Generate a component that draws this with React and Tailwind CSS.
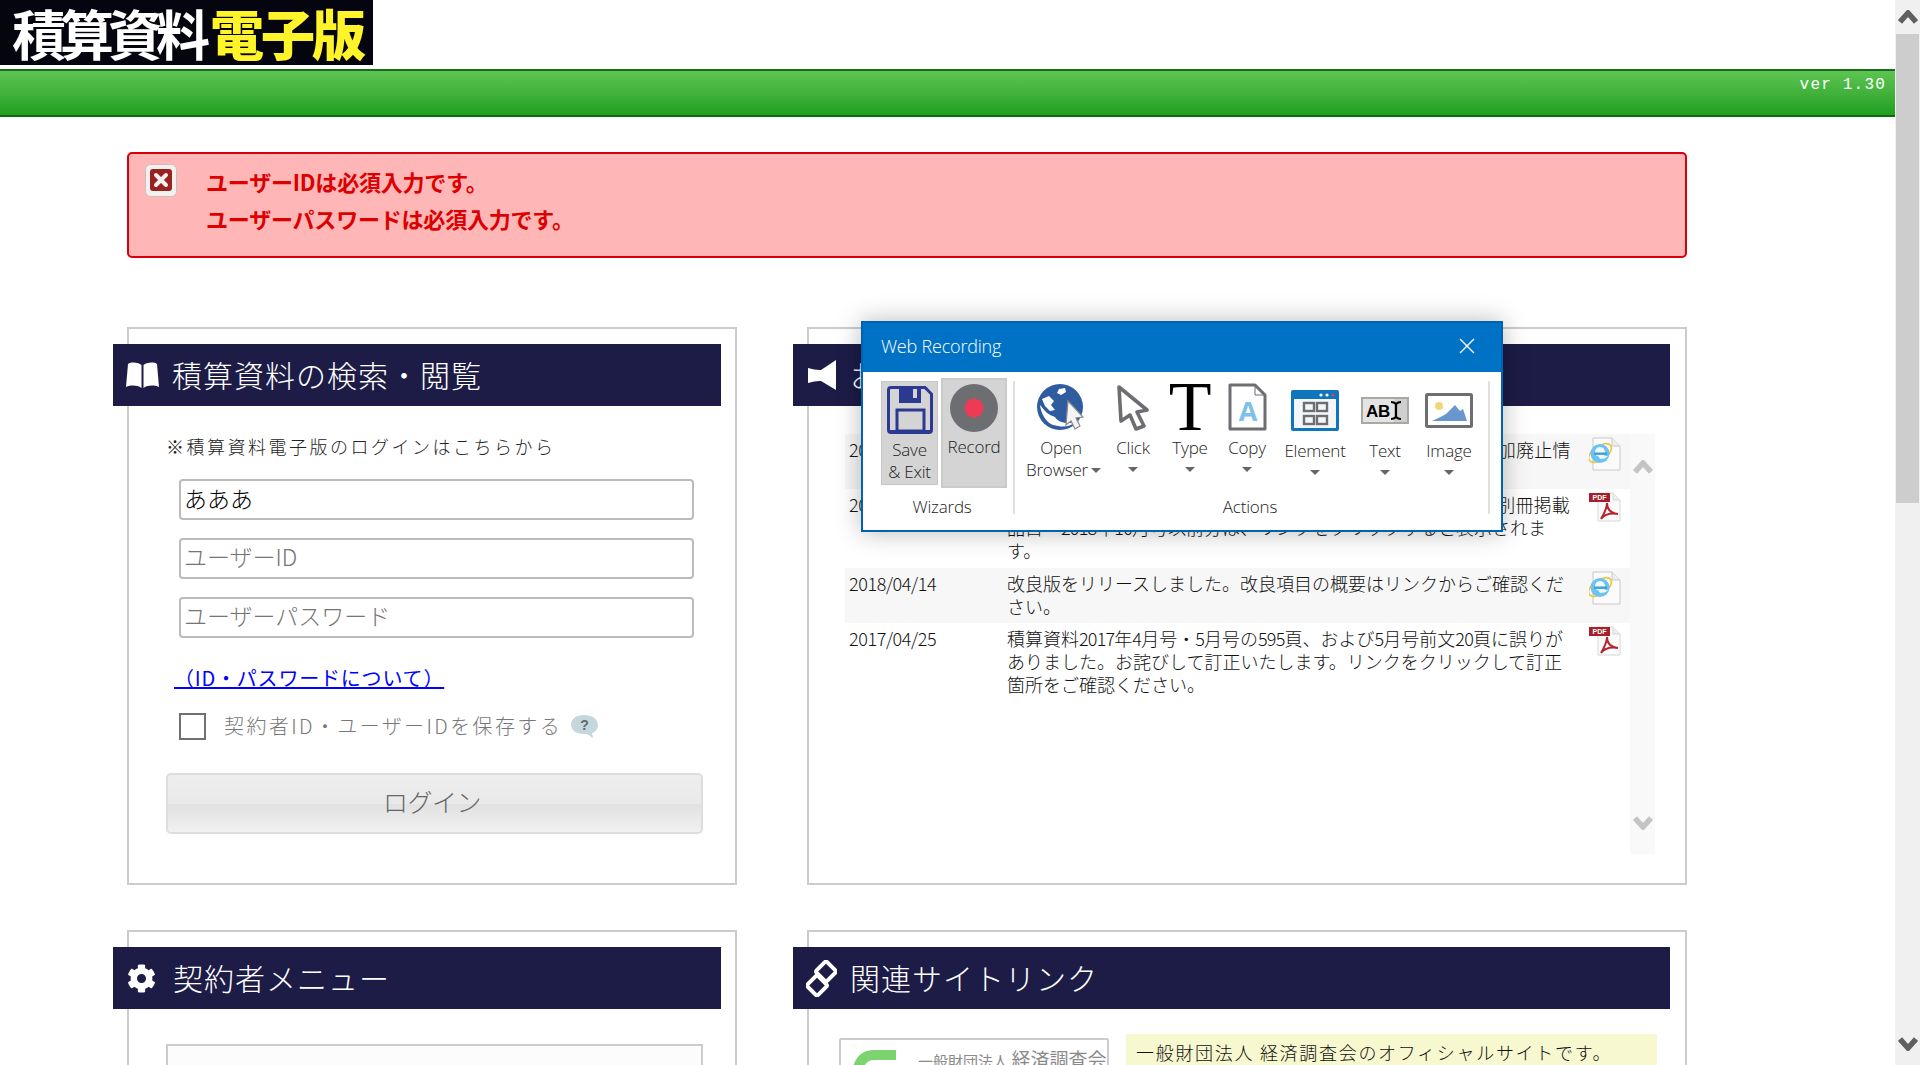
import React from "react";
import { FaCog } from "react-icons/fa";

const N = ({ children }) => <span className="tracking-[-0.8px]">{children}</span>;

const Chevron = ({ up, color = "#606060", size = 20, stroke = 5.5 }) => (
  <svg width={size} height={size * 0.7} viewBox="0 0 20 14" fill="none">
    <path d={up ? "M2 12 L10 3 L18 12" : "M2 2 L10 11 L18 2"} stroke={color} strokeWidth={stroke} />
  </svg>
);

const BookIcon = () => (
  <svg width="33" height="27" viewBox="0 0 33 27" fill="#fff">
    <path d="M15.5 3 C11 0 5 0 2 2 L0 25 C5 23 11 23 15.5 26 Z" />
    <path d="M17.5 3 C22 0 28 0 31 2 L33 25 C28 23 22 23 17.5 26 Z" />
  </svg>
);

const MegaphoneIcon = () => (
  <svg width="28" height="30" viewBox="0 0 28 30" fill="#fff">
    <path d="M0 8 Q8 10.5 13 10 L28 0 L28 30 L13 21 Q8 20.5 0 23 Z" />
  </svg>
);

const LinkIcon = () => (
  <svg width="31" height="37" viewBox="0 0 31 37" fill="none" stroke="#fff" strokeWidth="4">
    <rect x="12.5" y="4" width="15" height="15" rx="2" transform="rotate(45 20 11.5)" />
    <rect x="3.5" y="18" width="15" height="15" rx="2" transform="rotate(45 11 25.5)" />
  </svg>
);

const ErrorIcon = () => (
  <svg width="32" height="33" viewBox="0 0 32 33">
    <rect x="0.5" y="0.5" width="31" height="32" rx="5" fill="#f3f0f0" stroke="#cdbcbc" />
    <rect x="5" y="5" width="22" height="22" rx="3" fill="#97221f" />
    <path d="M11 11 L21 21 M21 11 L11 21" stroke="#f4f0f0" strokeWidth="4" strokeLinecap="round" />
  </svg>
);

const HelpIcon = () => (
  <svg width="29" height="25" viewBox="0 0 29 25">
    <path d="M14 1 C22 1 28 5 28 11 C28 15 25 18 22 19 L23 24 L17 20 L14 20 C6 20 1 16 1 11 C1 5 6 1 14 1 Z" fill="#c5d6dc" />
    <text x="14.5" y="16" fontSize="14" fontWeight="700" textAnchor="middle" fill="#5d6a72" fontFamily="Liberation Sans">?</text>
  </svg>
);

const IeIcon = () => (
  <svg width="32" height="34" viewBox="0 0 32 34">
    <path d="M4 1 H23 L31 9 V33 H4 Z" fill="#fbfbfb" stroke="#c9c9c9" />
    <path d="M23 1 V9 H31" fill="#eeeeee" stroke="#c9c9c9" />
    <ellipse cx="11" cy="16" rx="13" ry="7" fill="none" stroke="#eec53a" strokeWidth="1.6" transform="rotate(-35 11 16)" />
    <circle cx="11" cy="16.5" r="9.5" fill="#6cc2f0" />
    <circle cx="11" cy="15" r="5" fill="#eef9fe" />
    <rect x="5" y="15.5" width="13" height="2.4" fill="#3f9fdc" />
    <path d="M9 18 H14 L19 19.5 Q16 22 11 22 Z" fill="#eef9fe" />
  </svg>
);

const PdfIcon = () => (
  <svg width="32" height="30" viewBox="0 0 32 30">
    <path d="M9 1 H24 L31 8 V29 H9 Z" fill="#fbfbfb" stroke="#d6d6d6" />
    <path d="M24 1 V8 H31" fill="#eeeeee" stroke="#d6d6d6" />
    <rect x="0" y="1" width="21" height="9" fill="#a81f2b" />
    <text x="10.5" y="8" fontSize="7" fontWeight="700" fill="#fff" textAnchor="middle" fontFamily="Liberation Sans">PDF</text>
    <path d="M12 27 C15 22 18 17 18 11 C18 17 21 21 29 22 C23 21 16 22 12 27 Z" fill="none" stroke="#b5232e" strokeWidth="2" />
  </svg>
);

const SaveIcon = () => (
  <svg width="46" height="48" viewBox="0 0 46 48">
    <path d="M4 1.5 H38 L44.5 8 V44 Q44.5 46.5 42 46.5 H4 Q1.5 46.5 1.5 44 V4 Q1.5 1.5 4 1.5 Z" fill="none" stroke="#2b3990" strokeWidth="3" />
    <path d="M12 2 H34 V17 H12 Z" fill="#2b3990" />
    <rect x="26" y="3" width="4" height="9" fill="#d4d4d4" />
    <rect x="10" y="24" width="27" height="21" fill="none" stroke="#2b3990" strokeWidth="3" />
    <rect x="1" y="44" width="44" height="3" fill="#2b3990" />
  </svg>
);

const RecordIcon = () => (
  <svg width="48" height="48" viewBox="0 0 48 48">
    <circle cx="24" cy="24" r="24" fill="#6d6e71" />
    <circle cx="24" cy="24" r="9.5" fill="#ef3a55" />
  </svg>
);

const GlobeIcon = () => (
  <svg width="48" height="46" viewBox="0 0 48 46">
    <circle cx="23" cy="23" r="23" fill="#2f5c9e" />
    <path d="M3 21 C7 26 11 31 18 33 C20 37 28 41 38 38 C32 44 24 43 16 41 C9 38 4 30 3 21 Z" fill="#fff" />
    <path d="M5 15 L12 12 L17 17 L14 21 L18 26 L13 27 L8 22 Z" fill="#fff" />
    <path d="M22 5 L28 4 L29 8 L24 11 L20 9 Z" fill="#fff" />
    <path d="M31 17 L46 33 L39 34 L43 42 L38 45 L34 37 L29 41 Z" fill="#f4f4f4" stroke="#8a8a8a" strokeWidth="1.2" />
  </svg>
);

const CursorIcon = () => (
  <svg width="34" height="47" viewBox="0 0 34 47">
    <path d="M3 3 L31 26 L21 28 L28 42 L20 45 L14 31 L5 37 Z" fill="#fff" stroke="#6d6e71" strokeWidth="3.6" strokeLinejoin="round" />
  </svg>
);

const TypeIcon = () => (
  <span className="font-['Liberation_Serif',serif] text-[70px] leading-[48px] text-black">T</span>
);

const CopyIcon = () => (
  <svg width="39" height="48" viewBox="0 0 39 48">
    <path d="M2 2 H27 L37 12 V46 H2 Z" fill="#fff" stroke="#6d6e71" strokeWidth="3" strokeLinejoin="round" />
    <path d="M27 2 V12 H37" fill="none" stroke="#6d6e71" strokeWidth="1" />
    <text x="20" y="38" fontSize="27" fontWeight="700" textAnchor="middle" fill="#7cc1ea" fontFamily="Open Sans">A</text>
  </svg>
);

const ElementIcon = () => (
  <svg width="48" height="41" viewBox="0 0 48 41">
    <rect x="0" y="0" width="48" height="41" rx="2" fill="#0f75bc" />
    <rect x="3" y="9" width="42" height="29" fill="#f4f7fa" />
    <circle cx="30" cy="5" r="1.6" fill="#fff" />
    <circle cx="36" cy="5" r="1.6" fill="#fff" />
    <circle cx="42" cy="5" r="1.6" fill="#ef3a55" />
    {[[13, 13], [26, 13], [13, 26], [26, 26]].map(([x, y]) => (
      <rect key={x + "-" + y} x={x} y={y} width="10" height="8" fill="none" stroke="#6d6e71" strokeWidth="2.4" />
    ))}
  </svg>
);

const TextIcon = () => (
  <svg width="48" height="27" viewBox="0 0 48 27">
    <rect x="1" y="1" width="46" height="25" fill="#e4e4e4" stroke="#a9a9a2" strokeWidth="2" />
    <rect x="33" y="2" width="13" height="23" fill="#cfcfcf" />
    <text x="5" y="20" fontSize="17" fontWeight="700" fill="#000" fontFamily="Liberation Sans">AB</text>
    <path d="M30 5 Q33 5 35 7 Q37 5 40 5 M35 7 V20 M30 22 Q33 22 35 20 Q37 22 40 22" fill="none" stroke="#000" strokeWidth="2.2" />
  </svg>
);

const ImageIcon = () => (
  <svg width="48" height="35" viewBox="0 0 48 35">
    <rect x="1.5" y="1.5" width="45" height="32" rx="1" fill="#fff" stroke="#6d6e71" strokeWidth="3" />
    <circle cx="14" cy="13" r="4" fill="#efd77a" />
    <path d="M7 28 Q16 24 21 21 L30 12 L35 18 L38 16 L42 28 Z" fill="#6a96cf" />
  </svg>
);

const DropArrow = ({ className = "" }) => (
  <span className={"inline-block w-0 h-0 border-x-[5px] border-x-transparent border-t-[5px] border-t-[#666] " + className} />
);

const Tool = ({ w, second, icon, label, noArrow }) => (
  <div className={"flex flex-col items-center " + w}>
    <div className={second ? "h-[68px] pt-[8px] flex items-center justify-center" : "h-[65px] pt-[5px] flex items-center justify-center"}>
      <div className="h-[60px] flex items-center justify-center">{icon}</div>
    </div>
    <div className="leading-[22px] whitespace-nowrap">{label}</div>
    {noArrow ? null : <DropArrow className="mt-[8px]" />}
  </div>
);

const Dialog = () => (
  <div className="absolute left-[861px] top-[321px] w-[642px] h-[211px] border-2 border-[#0062b0] bg-white shadow-[0_0_24px_rgba(0,0,0,0.28)] font-['Open_Sans','Noto_Sans',sans-serif] text-[17px] tracking-[-0.2px] text-[#222] z-10">
    <div className="h-[49px] bg-[#0072c6] flex items-center justify-between pl-[18px] pr-[26px] pb-[3px] text-white">
      <span className="text-[18px] tracking-[-0.2px]">Web Recording</span>
      <svg width="16" height="16" viewBox="0 0 16 16" fill="none" stroke="#fff" strokeWidth="1.4">
        <path d="M1 1 L15 15 M15 1 L1 15" />
      </svg>
    </div>
    <div className="flex">
      <div className="w-[150px] h-[146px] flex flex-col shrink-0">
        <div className="flex-1 flex items-start pl-[18px] gap-[3px]">
          <div className="mt-[9px] w-[57px] h-[104px] bg-[#d4d4d4] border border-[#c6c6c6] flex flex-col items-center pt-[4px]">
            <SaveIcon />
            <div className="mt-[5px] text-center leading-[22px] whitespace-nowrap">Save<br />&amp; Exit</div>
          </div>
          <div className="mt-[6px] w-[66px] h-[110px] bg-[#d4d4d4] border-2 border-[#cacaca] flex flex-col items-center pt-[4px]">
            <RecordIcon />
            <div className="mt-[4px] leading-[22px]">Record</div>
          </div>
        </div>
        <div className="h-[22px] leading-[22px] text-center pl-[8px]">Wizards</div>
      </div>
      <div className="mt-[9px] w-[2px] h-[133px] bg-[#e0e0e0] shrink-0" />
      <div className="w-[473px] h-[146px] flex flex-col shrink-0">
        <div className="flex-1 flex">
          <Tool
            w="w-[92px]"
            noArrow
            icon={<GlobeIcon />}
            label={<div className="text-center">Open<br /><span className="relative inline-block mr-[8px]">Browser<DropArrow className="absolute -right-[13px] top-[9px]" /></span></div>}
          />
          <Tool w="w-[52px]" icon={<CursorIcon />} label="Click" />
          <Tool w="w-[62px]" icon={<TypeIcon />} label="Type" />
          <Tool w="w-[52px]" icon={<CopyIcon />} label="Copy" />
          <Tool w="w-[84px]" second icon={<ElementIcon />} label="Element" />
          <Tool w="w-[56px]" second icon={<TextIcon />} label="Text" />
          <Tool w="w-[72px]" second icon={<ImageIcon />} label="Image" />
        </div>
        <div className="h-[22px] leading-[22px] text-center pr-[3px]">Actions</div>
      </div>
      <div className="mt-[9px] w-[2px] h-[133px] bg-[#e0e0e0] shrink-0" />
    </div>
  </div>
);

const SectionHead = ({ icon, title, w, iconW }) => (
  <div className={"-ml-[16px] mt-[15px] h-[62px] bg-[#1c1c47] flex items-center text-white text-[30px] tracking-[1px] " + w}>
    <div className={"flex justify-center shrink-0 " + iconW}>{icon}</div>
    <span className="pb-[2px]">{title}</span>
  </div>
);

const Field = ({ value, placeholder }) => (
  <div className={"ml-[13px] w-[515px] h-[41px] border-2 border-[#bbbbbb] rounded-[4px] flex items-center pl-[3px] text-[23px] " + (value ? "text-black pb-[3px]" : "text-[#757575] pb-[5px]")}>
    {value || placeholder}
  </div>
);

const NewsRow = ({ date, shade, icon, tall, children }) => (
  <div className={"flex pt-[4px] " + (tall ? "pb-[6px] " : "pb-[5px] ") + (shade ? "bg-[#f7f7f7]" : "bg-white")}>
    <div className="w-[162px] pl-[4px] shrink-0 tracking-[-0.4px]">{date}</div>
    <div className="w-[582px] shrink-0 whitespace-nowrap">{children}</div>
    <div className="-mt-[1px]">{icon}</div>
  </div>
);

export default function App() {
  return (
    <div className="flex h-screen overflow-hidden bg-white font-['Noto_Sans_CJK_JP','Noto_Sans_CJK_SC',sans-serif] font-light">
      <main className="relative w-[1895px] h-[1065px] overflow-hidden shrink-0">
        <div className="w-[373px] h-[65px] bg-[#05050f] flex items-center pl-[12px] text-[54px] leading-none font-bold whitespace-nowrap">
          <span className="text-white tracking-[-6px]">積算資料</span>
          <span className="text-[#fff32a] font-black ml-[6px] tracking-[-3px]">電子版</span>
        </div>
        <div className="mt-[4px] h-[48px] border-t-2 border-t-[#1a6b1a] border-b-2 border-b-[#0c6c0c] bg-gradient-to-b from-[#5cc552] to-[#1f9f1f] flex justify-end pr-[9px] pt-[3px] text-white font-['Liberation_Mono',monospace] text-[16px] tracking-[1.2px] leading-[22px]">
          ver 1.30
        </div>

        <div className="ml-[127px] mt-[35px] w-[1560px] h-[106px] border-2 border-[#d9000e] rounded-[5px] bg-[#ffb6b6] flex pl-[16px] pt-[10px]">
          <ErrorIcon />
          <div className="ml-[29px] -mt-[1px] text-[22px] tracking-[-0.2px] font-bold text-[#dc0000] leading-[37px]">
            <div>ユーザーIDは必須入力です。</div>
            <div>ユーザーパスワードは必須入力です。</div>
          </div>
        </div>

        <div className="ml-[127px] mt-[69px] grid grid-cols-[610px_880px] gap-x-[70px] gap-y-[45px]">
          <section className="h-[558px] border-2 border-[#cccccc]">
            <SectionHead icon={<BookIcon />} title="積算資料の検索・閲覧" w="w-[608px]" iconW="w-[59px]" />
            <div className="pl-[37px]">
              <div className="mt-[27px] h-[26px] leading-[26px] text-[18px] tracking-[2.5px] text-[#222]">※積算資料電子版のログインはこちらから</div>
              <div className="mt-[20px] flex flex-col gap-[18px]">
                <Field value="あああ" />
                <Field placeholder="ユーザーID" />
                <Field placeholder="ユーザーパスワード" />
              </div>
              <a className="block ml-[8px] mt-[27px] h-[26px] leading-[26px] text-[20px] tracking-[0.8px] text-[#0000ff] underline font-normal">（ID・パスワードについて）</a>
              <div className="mt-[20px] ml-[13px] flex items-center">
                <div className="w-[27px] h-[27px] border-2 border-[#707070] bg-white shrink-0" />
                <span className="ml-[18px] text-[20px] tracking-[2.4px] text-[#777777]">契約者ID・ユーザーIDを保存する</span>
                <span className="ml-[8px]"><HelpIcon /></span>
              </div>
              <div className="mt-[32px] w-[537px] h-[61px] border-2 border-[#dddddd] rounded-[5px] bg-[linear-gradient(#eeeeee_0%,#e9e9e9_50%,#e1e1e1_52%,#f1f1f1_100%)] flex items-center justify-center pr-[5px] pb-[3px] text-[25px] tracking-[-0.5px] text-[#666666]">
                ログイン
              </div>
            </div>
          </section>

          <section className="h-[558px] border-2 border-[#cccccc]">
            <SectionHead icon={<MegaphoneIcon />} title="お知らせ" w="w-[877px]" iconW="w-[57px]" />
            <div className="ml-[36px] mt-[28px] w-[810px] h-[420px] flex text-[18px] leading-[23px] text-[#111]">
              <div className="w-[785px] shrink-0">
                <NewsRow date="2019/03/30" shade icon={<IeIcon />}>
                  <span className="tracking-[0.23px]">本年度の積算資料電子版に掲載の収録品目について、品目追加廃止情</span><br />報を掲載しました。
                </NewsRow>
                <NewsRow date="2018/10/26" tall icon={<PdfIcon />}>
                  <span className="tracking-[0.23px]"><N>2018</N>年<N>10</N>月号より積算資料のバックナンバーに関する情報の別冊掲載</span><br />
                  品目・<N>2018</N>年<N>10</N>月号以前分は、リンクをクリックすると表示されま<br />
                  す。
                </NewsRow>
                <NewsRow date="2018/04/14" shade icon={<IeIcon />}>
                  改良版をリリースしました。改良項目の概要はリンクからご確認くだ<br />さい。
                </NewsRow>
                <NewsRow date="2017/04/25" icon={<PdfIcon />}>
                  積算資料<N>2017</N>年<N>4</N>月号・<N>5</N>月号の<N>595</N>頁、および<N>5</N>月号前文<N>20</N>頁に誤りが<br />
                  ありました。お詫びして訂正いたします。リンクをクリックして訂正<br />
                  箇所をご確認ください。
                </NewsRow>
              </div>
              <div className="w-[25px] bg-[#f9f9f9] flex flex-col items-center justify-between pt-[26px] pb-[24px]">
                <Chevron up color="#c4c4c4" />
                <Chevron color="#c4c4c4" />
              </div>
            </div>
          </section>

          <section className="h-[300px] border-2 border-[#cccccc]">
            <SectionHead icon={<FaCog size={29} color="#fff" />} title="契約者メニュー" w="w-[608px]" iconW="w-[60px] pr-[3px]" />
            <div className="ml-[37px] mt-[35px] w-[537px] h-[120px] border-2 border-[#cccccc] bg-[#fcfcfc]" />
          </section>

          <section className="h-[300px] border-2 border-[#cccccc]">
            <SectionHead icon={<LinkIcon />} title="関連サイトリンク" w="w-[877px]" iconW="w-[57px]" />
            <div className="ml-[30px] mt-[25px] flex items-start">
              <div className="mt-[4px] w-[270px] h-[90px] border-2 border-[#cccccc] rounded-[2px] flex items-start pl-[9px] pt-[8px]">
                <svg width="52" height="40" viewBox="0 0 52 40" fill="none">
                  <path d="M46 7 H24 Q8 7 6 30" stroke="#7bd46f" strokeWidth="10" />
                </svg>
                <span className="ml-[16px] -mt-[3px] text-[#8a8a8a] whitespace-nowrap font-normal"><span className="text-[15px]">一般財団法人 </span><span className="text-[19px]">経済調査会</span></span>
              </div>
              <div className="ml-[17px] w-[531px] h-[90px] bg-[#f7f7d0] pl-[10px] pt-[6px] text-[18px] tracking-[1.7px] text-[#111] whitespace-nowrap leading-[24px]">
                一般財団法人 経済調査会のオフィシャルサイトです。
              </div>
            </div>
          </section>
        </div>

        <Dialog />
      </main>

      <aside className="w-[25px] h-[1065px] bg-[#f0f0f0] flex flex-col shrink-0">
        <div className="h-[34px] flex items-center justify-center"><Chevron up /></div>
        <div className="mx-[1px] h-[469px] bg-[#cdcdcd]" />
        <div className="flex-1" />
        <div className="h-[34px] flex items-start justify-center pt-[6px]"><Chevron /></div>
      </aside>
    </div>
  );
}
